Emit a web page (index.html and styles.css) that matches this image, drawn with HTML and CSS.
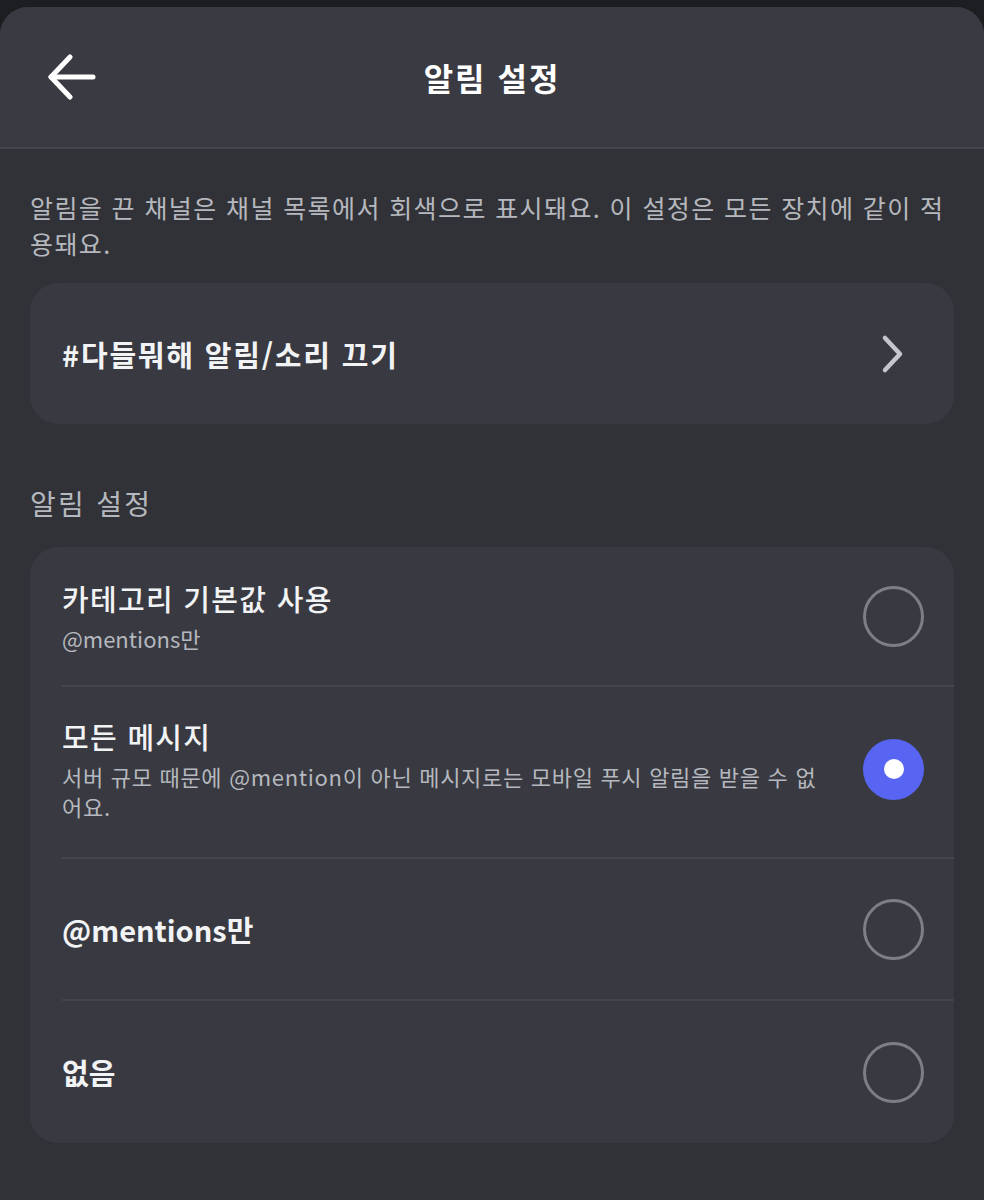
FILE: index.html
```html
<!DOCTYPE html>
<html lang="ko">

<head>
    <meta charset="UTF-8">
    <meta name="viewport" content="width=device-width, initial-scale=1.0">
    <title>알림 설정</title>
    <link rel="stylesheet" href="styles.css">
</head>

<body>

    <div class="sheet">
        <header class="header">
            <button type="button" class="back" aria-label="뒤로">
                <svg width="48" height="48" viewBox="0 0 48 48" fill="none" stroke="#fff" stroke-width="5" stroke-linecap="round" stroke-linejoin="round">
                    <path d="M22 4 L3 24 L22 44" />
                    <path d="M3 24 H45" />
                </svg>
            </button>
            <h1 class="title">알림 설정</h1>
            <div></div>
        </header>

        <main class="content">
            <p class="desc">알림을 끈 채널은 채널 목록에서 회색으로 표시돼요. 이 설정은 모든 장치에 같이 적용돼요.</p>

            <div class="card mute">
                <span class="mute-label">#다들뭐해 알림/소리 끄기</span>
                <svg class="chevron" width="24" height="40" viewBox="0 0 24 40" fill="none" stroke="#c5c7cc" stroke-width="4.5" stroke-linecap="round" stroke-linejoin="round">
                    <path d="M5 4 L20 20 L5 36" />
                </svg>
            </div>

            <h2 class="section">알림 설정</h2>

            <div class="card options">
                <div class="option first">
                    <div class="option-inner">
                        <div class="option-text">
                            <div class="option-title">카테고리 기본값 사용</div>
                            <div class="option-sub">@mentions만</div>
                        </div>
                        <span class="radio"></span>
                    </div>
                </div>
                <div class="option second">
                    <div class="option-inner">
                        <div class="option-text">
                            <div class="option-title">모든 메시지</div>
                            <div class="option-sub">서버 규모 때문에 @mention이 아닌 메시지로는 모바일 푸시 알림을 받을 수 없어요.</div>
                        </div>
                        <span class="radio checked"></span>
                    </div>
                </div>
                <div class="option single">
                    <div class="option-inner">
                        <div class="option-text">
                            <div class="option-title strong">@mentions만</div>
                        </div>
                        <span class="radio"></span>
                    </div>
                </div>
                <div class="option single last">
                    <div class="option-inner">
                        <div class="option-text">
                            <div class="option-title strong">없음</div>
                        </div>
                        <span class="radio"></span>
                    </div>
                </div>
            </div>
        </main>
    </div>

</body>

</html>
```

FILE: styles.css
```css
body {
    margin: 0;
    background-color: #1d1e22;
    font-family: "Noto Sans CJK KR", "Noto Sans", sans-serif;
    color: #f2f3f5;
}

.sheet {
    margin-top: 7px;
    min-height: calc(100vh - 7px);
    background-color: #313237;
    border-radius: 28px 28px 0 0;
    overflow: hidden;
}

.header {
    display: grid;
    grid-template-columns: 1fr auto 1fr;
    align-items: center;
    height: 140px;
    background-color: #3a3b42;
    border-bottom: 2px solid #46474e;
}

.back {
    justify-self: start;
    margin-left: 48px;
    padding: 0;
    border: none;
    background: none;
    display: flex;
    cursor: pointer;
}

.title {
    margin: 0;
    font-size: 32px;
    font-weight: 700;
    letter-spacing: 2px;
    color: #fff;
}

.content {
    padding: 0 30px 40px;
}

.desc {
    margin: 40px 0 22px;
    font-size: 25px;
    line-height: 36px;
    letter-spacing: 1.4px;
    color: #b5b8be;
}

.card {
    background-color: #393a41;
    border-radius: 28px;
}

.mute {
    display: flex;
    align-items: center;
    justify-content: space-between;
    height: 141px;
    padding: 0 50px 0 32px;
}

.mute-label {
    font-size: 29px;
    font-weight: 700;
    letter-spacing: 1.8px;
    color: #f2f3f5;
}

.section {
    margin: 61px 0 26px;
    font-size: 28px;
    line-height: 36px;
    font-weight: 400;
    letter-spacing: 2.3px;
    color: #b5b8be;
}

.option {
    padding-left: 32px;
}

.option-inner {
    display: flex;
    align-items: center;
    gap: 40px;
    padding-right: 30px;
    border-bottom: 2px solid #45464d;
}

.option.last .option-inner {
    border-bottom: none;
}

.option.first .option-inner {
    padding-top: 32px;
    padding-bottom: 32px;
}

.option.second .option-inner {
    padding-top: 30px;
    padding-bottom: 36px;
}

.option.single .option-inner {
    min-height: 140px;
}

.option.last .option-inner {
    min-height: 142px;
}

.option-text {
    flex: 1;
}

.option-title {
    font-size: 29px;
    line-height: 38px;
    font-weight: 500;
    letter-spacing: 1.3px;
    color: #f2f3f5;
}

.option-title.strong {
    font-weight: 600;
    letter-spacing: 0;
}

.option-sub {
    margin-top: 6px;
    font-size: 22px;
    line-height: 30px;
    letter-spacing: 0.7px;
    color: #b5b8be;
}

.option.first .option-sub {
    letter-spacing: 0;
}

.radio {
    flex: none;
    box-sizing: border-box;
    width: 61px;
    height: 61px;
    border: 3px solid #7e7f85;
    border-radius: 50%;
    display: flex;
    align-items: center;
    justify-content: center;
}

.radio.checked {
    border: none;
    background-color: #5865f2;
}

.radio.checked::after {
    content: "";
    width: 20px;
    height: 20px;
    border-radius: 50%;
    background-color: #fff;
}
```
